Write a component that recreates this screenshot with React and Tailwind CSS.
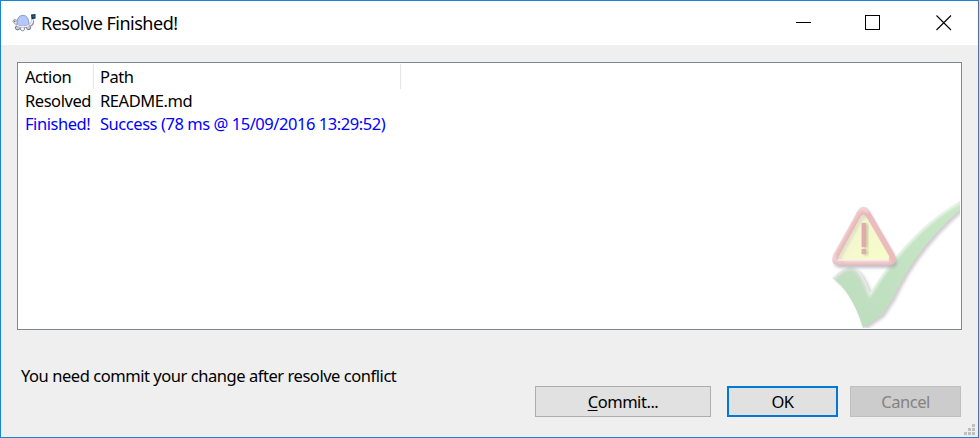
function TortoiseIcon() {
  return (
    <svg width="24" height="20" viewBox="0 0 24 20" className="block shrink-0">
      <path d="M18 12C20 11.500 21 9.500 20.500 7" stroke="#8d90a0" strokeWidth="3" fill="none" />
      <path d="M17.500 12C19.500 11 20.500 9.500 20.500 7" stroke="#f4f4fa" strokeWidth="1.600" fill="none" />
      <path d="M5 12Q2 11 1 8.500Q1 6 3.500 6.500Q5.500 7 6 10Z" fill="#e4e4ec" stroke="#8d90a0" strokeWidth=".8" />
      <path d="M4 13Q2 16 5 17Q8 17 9 14L14 14Q15 18 18 16.500Q20 14 17 12Z" fill="#c9cad4" stroke="#666a7c" strokeWidth=".9" />
      <path d="M8 14Q8 18 11 18Q13 18 12.500 14Z" fill="#f4f4fa" stroke="#777a88" strokeWidth=".8" />
      <path d="M5 12Q4.500 2.500 11 2.300Q17 2.500 17 12Q11 14.500 5 12Z" fill="#b4c8fc" stroke="#8290c0" strokeWidth=".9" />
      <path d="M4.500 12Q11 15.500 17.500 12" stroke="#eeeef6" strokeWidth="1.400" fill="none" />
      <path d="M19 1.500L23.500 1V5.500L19.500 6.500Z" fill="#12324c" />
      <path d="M20.500 2.500H22.500V4.300H20.500Z" fill="#1c7896" />
      <circle cx="2.800" cy="8.300" r=".7" fill="#444" />
    </svg>
  );
}

function Watermark() {
  return (
    <svg width="128" height="128" viewBox="0 0 128 128" className="block">
      <defs>
        <filter id="soft" x="-20%" y="-20%" width="140%" height="140%">
          <feGaussianBlur stdDeviation="1.6" />
        </filter>
        <linearGradient id="tick" x1="0" y1="1" x2="1" y2="0">
          <stop offset="0" stopColor="#bddcbd" />
          <stop offset="1" stopColor="#c8e8c6" />
        </linearGradient>
        <linearGradient id="warn" x1="0" y1="0" x2="1" y2="1">
          <stop offset="0" stopColor="#f0f3d6" />
          <stop offset="1" stopColor="#f8fdc6" />
        </linearGradient>
        <clipPath id="tickClip">
          <path d="M.5 78Q11 67 19 67Q29 67 38 93Q77 30 128 1V10Q84 48 61 98L50 115L31 128Q20 92 .5 78Z" />
        </clipPath>
      </defs>
      <path d="M.5 78Q11 67 19 67Q29 67 38 93Q77 30 128 1V10Q84 48 61 98L50 115L31 128Q20 92 .5 78Z" transform="translate(2.500 2)" fill="#b8b0b8" opacity=".65" filter="url(#soft)" />
      <path d="M.5 78Q11 67 19 67Q29 67 38 93Q77 30 128 1V10Q84 48 61 98L50 115L31 128Q20 92 .5 78Z" fill="url(#tick)" />
      <g clipPath="url(#tickClip)">
        <path d="M.5 78Q11 67 19 67Q29 67 38 93Q77 30 128 1" fill="none" stroke="#fff" strokeWidth="4" opacity=".75" filter="url(#soft)" />
        <path d="M1 81Q11 70 19 70Q27 70 36 95" fill="none" stroke="#e0d4dc" strokeWidth="2" opacity=".6" filter="url(#soft)" />
      </g>
      <path d="M27 9.500Q31 5 35.500 9.500L62 55Q66 65 56 65H8Q-3 65 1 55Z" transform="translate(2 3)" fill="#a8a0a8" opacity=".65" filter="url(#soft)" />
      <path d="M26 10Q28 7 31.500 7Q35 7 37 10L62.500 54Q67 65 56 65H8Q-3 65 1.500 54Z" fill="#ebbcbe" />
      <path d="M26 11Q31 5.500 36 11M24 13L2.500 52Q1 56 2 60M5 61H57" fill="none" stroke="#fff" strokeWidth="2" opacity=".7" strokeLinecap="round" filter="url(#soft)" />
      <path d="M28.500 17Q31.500 12.500 34.500 17L57 56Q58 60 54 60H10Q5 60 7 56Z" fill="url(#warn)" />
      <path d="M10 60Q5 60 7 56L28.500 17Q31.500 12.500 34.500 17" transform="translate(1 1)" fill="none" stroke="#b4a8a4" strokeWidth="1.800" opacity=".55" filter="url(#soft)" />
      <path d="M6 60H57" stroke="#f8eef0" strokeWidth="1.500" />
      <path d="M31 24H36V48H31ZM31 50H36V55H31Z" fill="#b5b08c" opacity=".7" filter="url(#soft)" />
      <path d="M29 23H34V47H29ZM29 49H34V54H29Z" fill="#e2a9ae" />
      <path d="M29.500 23V47M29.500 49V54" stroke="#f0d0d0" />
    </svg>
  );
}

function SizeGrip() {
  return (
    <svg width="11" height="11" viewBox="0 0 11 11" className="absolute right-[3px] bottom-[2px]">
      <path d="M8 0h3v3h-3zM4 4h3v3h-3zM8 4h3v3h-3zM0 8h3v3h-3zM4 8h3v3h-3zM8 8h3v3h-3z" fill="#bfbfbf" />
    </svg>
  );
}

export default function App() {
  return (
    <div className="relative flex h-[438px] w-[979px] flex-col overflow-hidden border border-[#1883d7] bg-[#efefef] font-['Noto_Sans',sans-serif] text-[16.500px] leading-6 whitespace-nowrap text-black">
      <header className="flex h-11 shrink-0 items-center bg-white">
        <div className="flex items-center pl-[11px]">
          <TortoiseIcon />
          <h1 className="pl-[5px] text-[18px] tracking-[-0.5px]">Resolve Finished!</h1>
        </div>
        <svg width="156" height="16" viewBox="0 0 156 16" className="mr-[26px] ml-auto block" fill="none" stroke="#000" shapeRendering="crispEdges">
          <path d="M0 7.500H15M69.500.5H83.500V14.500H69.500Z" />
          <path d="M140.500.5L155 15M155 .5L140.500 15" shapeRendering="auto" strokeWidth="1.100" />
        </svg>
      </header>

      <main className="relative mt-[17px] ml-4 h-[268px] w-[945px] shrink-0 border border-[#828790] bg-white">
        <div className="flex h-[26px] pt-px">
          <div className="w-[76px] border-r border-[#e5e5e5] pl-[7px] leading-[26px] tracking-[-0.45px]">Action</div>
          <div className="w-[307px] border-r border-[#e5e5e5] pl-[6px] leading-[26px] tracking-[-0.45px]">Path</div>
        </div>
        <div className="flex h-[23px] items-center">
          <div className="w-[76px] pl-[7px] tracking-[-0.45px]">Resolved</div>
          <div className="pl-[6px] tracking-[-0.45px]">README.md</div>
        </div>
        <div className="flex h-[23px] items-center text-[#0000ff]">
          <div className="w-[76px] pl-[7px] tracking-[-0.45px]">Finished!</div>
          <div className="pl-[6px] tracking-[-0.45px]">Success (78 ms @ 15/09/2016 13:29:52)</div>
        </div>
        <div className="absolute right-px bottom-px">
          <Watermark />
        </div>
      </main>

      <p className="mt-[34px] ml-5 h-[22px] leading-6 tracking-[-0.45px]">You need commit your change after resolve conflict</p>

      <footer className="mr-[17px] flex justify-end">
        <button className="h-[31px] w-[176px] border border-[#adadad] bg-[#e1e1e1] tracking-[-0.45px]">
          <span className="underline decoration-1 underline-offset-2">C</span>ommit...
        </button>
        <button className="ml-4 h-[31px] w-[111px] border-2 border-[#0078d7] bg-[#e1e1e1] tracking-[-0.45px]">OK</button>
        <button className="ml-3 h-[31px] w-[111px] border border-[#bfbfbf] bg-[#cccccc] tracking-[-0.45px] text-[#838383]">Cancel</button>
      </footer>
      <SizeGrip />
    </div>
  );
}
